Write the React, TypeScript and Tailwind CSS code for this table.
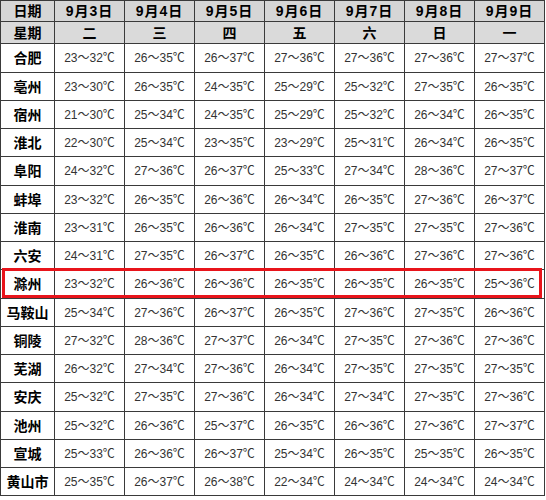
const dates = ["9月3日", "9月4日", "9月5日", "9月6日", "9月7日", "9月8日", "9月9日"]
const weekdays = ["二", "三", "四", "五", "六", "日", "一"]

const rows: [string, string[]][] = [
  ["合肥", ["23～32", "26～35", "26～37", "27～36", "27～36", "27～36", "27～37"]],
  ["亳州", ["23～30", "26～35", "24～35", "25～29", "25～32", "27～35", "26～35"]],
  ["宿州", ["21～30", "25～34", "24～35", "25～29", "25～32", "26～34", "26～35"]],
  ["淮北", ["22～30", "25～34", "23～35", "23～29", "25～31", "26～34", "26～35"]],
  ["阜阳", ["24～32", "27～36", "26～37", "25～33", "27～34", "28～36", "27～37"]],
  ["蚌埠", ["23～32", "26～35", "26～36", "26～34", "26～35", "27～36", "26～37"]],
  ["淮南", ["23～31", "26～35", "26～36", "26～34", "27～35", "27～35", "27～36"]],
  ["六安", ["24～31", "27～35", "26～37", "26～35", "26～36", "27～36", "27～36"]],
  ["滁州", ["23～32", "26～36", "26～36", "26～35", "26～35", "26～35", "25～36"]],
  ["马鞍山", ["25～34", "27～36", "26～37", "26～35", "27～36", "27～35", "26～36"]],
  ["铜陵", ["27～32", "28～36", "27～37", "26～34", "27～35", "27～36", "27～36"]],
  ["芜湖", ["26～32", "27～34", "27～36", "26～34", "27～35", "27～35", "27～35"]],
  ["安庆", ["25～32", "27～35", "27～36", "26～34", "27～34", "27～35", "27～36"]],
  ["池州", ["25～32", "26～36", "25～37", "26～35", "26～36", "27～36", "27～37"]],
  ["宣城", ["25～33", "26～36", "26～37", "25～34", "26～35", "25～35", "26～35"]],
  ["黄山市", ["25～35", "26～37", "26～38", "22～34", "24～34", "24～34", "24～34"]],
]

export default function App() {
  return (
    <div
      className="relative w-[546px] h-[500px] bg-white"
      style={{ fontFamily: '"Liberation Sans", "Noto Sans CJK SC", sans-serif' }}
    >
      <table className="table-fixed border-collapse w-[545px] text-black">
        <colgroup>
          <col className="w-[54px]" />
          {dates.map((d) => (
            <col key={d} className="w-[70px]" />
          ))}
        </colgroup>
        <tbody>
          <tr className="h-[21px] bg-[#d6d6d6]">
            <td className="border border-[#3a3a3a] text-center text-[14px] font-bold leading-none">日期</td>
            {dates.map((d) => (
              <td key={d} className="border border-[#3a3a3a] text-center text-[14px] font-bold leading-none tracking-[1px]">
                {d}
              </td>
            ))}
          </tr>
          <tr className="h-[22px] bg-[#dadada]">
            <td className="border border-[#3a3a3a] text-center text-[14px] font-bold leading-none">星期</td>
            {weekdays.map((w) => (
              <td key={w} className="border border-[#3a3a3a] text-center text-[14px] font-bold leading-none">
                {w}
              </td>
            ))}
          </tr>
          {rows.map(([city, temps], i) => (
            <tr key={city} className={i % 4 === 0 ? "h-[29px]" : "h-[28px]"}>
              <td className="border border-[#3a3a3a] text-center text-[14px] font-bold leading-none">{city}</td>
              {temps.map((t, j) => (
                <td key={j} className="border border-[#3a3a3a] text-center text-[12px] text-[#333] leading-none">
                  {t}℃
                </td>
              ))}
            </tr>
          ))}
        </tbody>
      </table>
      {/* highlight around the 滁州 row */}
      <div className="absolute left-[2px] top-[268px] w-[540px] h-[30px] border-[3px] border-[#e8141b]" />
    </div>
  )
}
